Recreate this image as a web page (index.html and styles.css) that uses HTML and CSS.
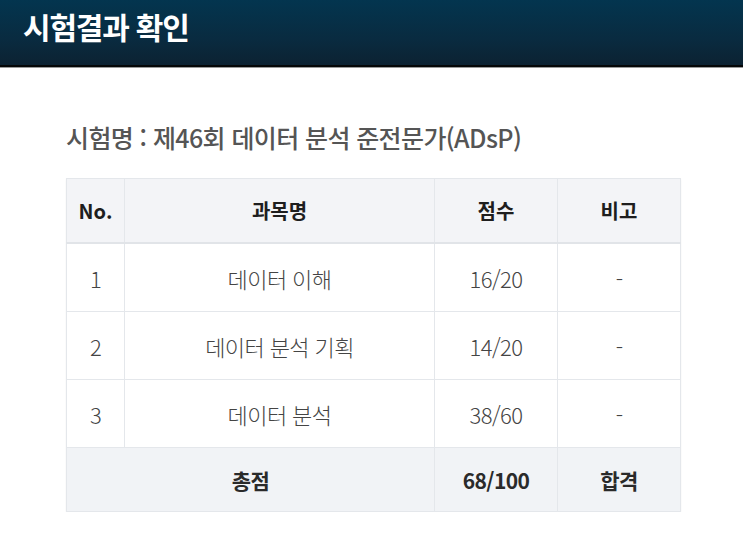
FILE: index.html
```html
<!DOCTYPE html>
<html lang="ko">
<head>
<meta charset="utf-8">
<title>시험결과 확인</title>
<link rel="stylesheet" href="styles.css">
</head>
<body>
<header class="topbar">
  <h1 class="topbar-title">시험결과 확인</h1>
</header>
<main class="content">
  <h2 class="exam-name">시험명 : 제46회 데이터 분석 준전문가(ADsP)</h2>
  <table class="result">
    <colgroup>
      <col class="c-no">
      <col class="c-subject">
      <col class="c-score">
      <col class="c-note">
    </colgroup>
    <thead>
      <tr>
        <th>No.</th>
        <th>과목명</th>
        <th>점수</th>
        <th>비고</th>
      </tr>
    </thead>
    <tbody>
      <tr>
        <td>1</td>
        <td>데이터 이해</td>
        <td>16/20</td>
        <td>-</td>
      </tr>
      <tr>
        <td>2</td>
        <td>데이터 분석 기획</td>
        <td>14/20</td>
        <td>-</td>
      </tr>
      <tr>
        <td>3</td>
        <td>데이터 분석</td>
        <td>38/60</td>
        <td>-</td>
      </tr>
    </tbody>
    <tfoot>
      <tr>
        <td colspan="2">총점</td>
        <td>68/100</td>
        <td>합격</td>
      </tr>
    </tfoot>
  </table>
</main>
</body>
</html>
```
FILE: styles.css
```css
html, body {
  margin: 0;
  padding: 0;
  background: #ffffff;
  font-family: "Noto Sans CJK KR", "Noto Sans", sans-serif;
}

.topbar {
  height: 65px;
  background: linear-gradient(180deg, #03354f 0%, #092b40 60%, #0c2232 100%);
  border-bottom: 2px solid #050708;
  box-shadow: 0 1px 0 #9a9a9a;
  display: flex;
  align-items: center;
  padding-left: 23px;
  box-sizing: content-box;
}

.topbar-title {
  margin: 0;
  margin-top: -13px;
  color: #ffffff;
  font-size: 30px;
  font-weight: 700;
  letter-spacing: -1.2px;
}

.content {
  padding: 53px 63px 0 66px;
}

.exam-name {
  margin: 0 0 24px 0;
  font-size: 25px;
  font-weight: 500;
  color: #555555;
  letter-spacing: -0.6px;
  line-height: 34px;
}

.result {
  width: 614px;
  border-collapse: collapse;
  table-layout: fixed;
  border: 1px solid #e2e5e9;
  box-shadow: 0 1px 2px rgba(0,0,0,0.05);
}

.c-no { width: 58px; }
.c-subject { width: 310px; }
.c-score { width: 123px; }
.c-note { width: 123px; }

.result th,
.result td {
  border: 1px solid #e4e7eb;
  text-align: center;
  padding: 0;
}

.result th {
  height: 63px;
  background: #f3f4f7;
  color: #1e1e1e;
  font-size: 20px;
  font-weight: 700;
  border-bottom: 2px solid #e1e4e8;
}

.result tbody td {
  height: 67px;
  color: #444444;
  font-size: 22px;
  font-weight: 300;
  letter-spacing: -0.6px;
}

.result tfoot td {
  height: 63px;
  background: #f1f3f6;
  color: #2a2a2a;
  font-size: 21px;
  font-weight: 700;
  letter-spacing: -0.6px;
}
```
